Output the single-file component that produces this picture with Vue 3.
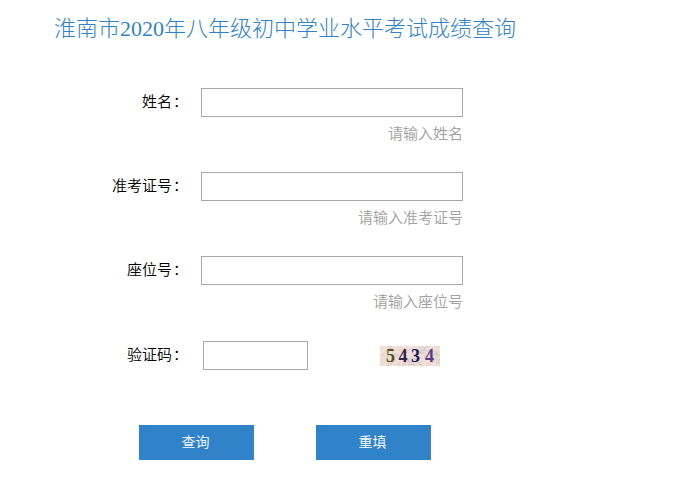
<template>
  <div class="query-page" lang="zh-CN">
    <h1 class="title">淮南市2020年八年级初中学业水平考试成绩查询</h1>

    <form class="query-form" @submit.prevent>
      <div v-for="field in fields" :key="field.key" class="form-row">
        <label class="label" :for="field.key">{{ field.label }}<span class="colon">：</span></label>
        <div class="field">
          <input :id="field.key" v-model="form[field.key]" class="text-input" type="text" autocomplete="off" />
          <p class="hint">请输入{{ field.label }}</p>
        </div>
      </div>

      <div class="form-row code-row">
        <label class="label" for="code">验证码<span class="colon">：</span></label>
        <input id="code" v-model="form.code" class="text-input code-input" type="text" autocomplete="off" />
        <svg class="captcha" width="60" height="20" viewBox="0 0 60 20">
          <rect width="60" height="20" fill="#eedfd6" />
          <line
            v-for="(line, i) in noise"
            :key="i"
            :x1="line.x1"
            :y1="line.y1"
            :x2="line.x2"
            :y2="line.y2"
            :stroke="line.color"
            stroke-width="0.8"
          />
          <text
            v-for="digit in digits"
            :key="digit.x"
            :x="digit.x"
            y="16"
            :fill="digit.color"
            class="captcha-digit"
          >{{ digit.value }}</text>
        </svg>
      </div>

      <div class="buttons">
        <button type="submit" class="btn">查询</button>
        <button type="button" class="btn" @click="resetForm">重填</button>
      </div>
    </form>
  </div>
</template>

<script setup>
import { reactive } from 'vue';

const fields = [
  { key: 'name', label: '姓名' },
  { key: 'ticket', label: '准考证号' },
  { key: 'seat', label: '座位号' }
];

const form = reactive({ name: '', ticket: '', seat: '', code: '' });

const digits = [
  { value: '5', x: 6, color: '#52521f' },
  { value: '4', x: 18.5, color: '#30234c' },
  { value: '3', x: 31, color: '#19195f' },
  { value: '4', x: 45, color: '#583b83' }
];

// Líneas cortas de fondo del código de verificación
const colors = ['#c7b5b4', '#e0c9c4', '#d2c6cd', '#f8eee5', '#c9bdb0', '#ead0cf', '#f5e6dd'];
const noise = Array.from({ length: 110 }, (_, i) => {
  const x1 = (i * 37) % 61;
  const y1 = (i * 13 + Math.floor(i / 7) * 3) % 21;
  return {
    x1,
    y1,
    x2: x1 + ((i * 17) % 13) - 6,
    y2: y1 + ((i * 11) % 13) - 6,
    color: colors[i % colors.length]
  };
});

const resetForm = () => {
  Object.keys(form).forEach((key) => {
    form[key] = '';
  });
};
</script>

<style>
body {
  margin: 0;
  background-color: #fff;
}
</style>

<style scoped>
.query-page {
  box-sizing: border-box;
  width: 675px;
  height: 484px;
  padding-top: 14px;
  overflow: hidden;
  font-family: "Liberation Serif", "Noto Sans CJK SC", sans-serif;
  font-size: 15px;
  font-weight: 350;
  color: #000;
}

.title {
  margin: 0 0 0 54px;
  height: 30px;
  line-height: 30px;
  font-size: 22px;
  font-weight: 300;
  color: #3083c8;
  white-space: nowrap;
}

.query-form {
  margin-top: 44px;
}

.form-row {
  display: flex;
  align-items: flex-start;
  height: 84px;
}

.label {
  width: 187px;
  margin-right: 14px;
  line-height: 29px;
  text-align: right;
  white-space: nowrap;
}

.colon {
  display: inline-block;
  width: 15px;
  text-indent: 1px;
  text-align: left;
}

.field {
  width: 262px;
}

.text-input {
  display: block;
  box-sizing: border-box;
  width: 262px;
  height: 29px;
  padding: 0 6px;
  border: 1px solid #a9a9a9;
  border-radius: 0;
  outline: none;
  background-color: #fff;
  font: inherit;
}

.hint {
  margin: 7px 0 0;
  line-height: 20px;
  text-align: right;
  color: #a0a0a0;
}

.code-row {
  padding-top: 1px;
  height: 84px;
  box-sizing: border-box;
}

.code-input {
  width: 105px;
  margin-left: 2px;
}

.captcha {
  display: block;
  margin: 5px 0 0 72px;
  cursor: pointer;
}

.captcha-digit {
  font-family: "Liberation Serif", serif;
  font-size: 18px;
  font-weight: bold;
}

.buttons {
  display: flex;
  gap: 62px;
  margin-left: 139px;
  padding-top: 1px;
}

.btn {
  width: 115px;
  height: 35px;
  padding: 0 2px 0 0;
  border: none;
  border-radius: 0;
  background-color: #3083c8;
  color: #fff;
  font-family: inherit;
  font-size: 14px;
  font-weight: 350;
  line-height: 35px;
  cursor: pointer;
}
</style>
